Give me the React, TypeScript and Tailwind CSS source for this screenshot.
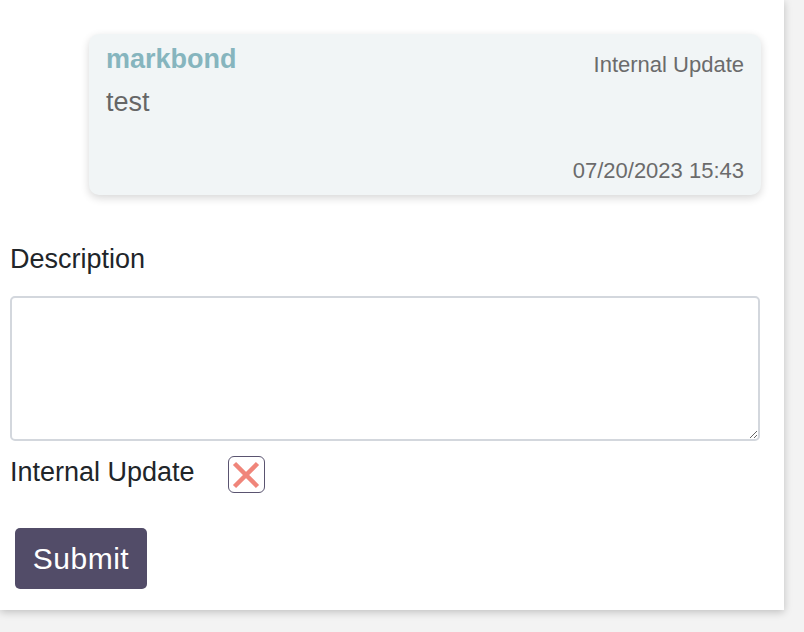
import React from "react";

export default function App() {
  return (
    <div
      className="w-[804px] h-[632px] bg-[#f3f3f3] overflow-hidden"
      style={{ fontFamily: '"Liberation Sans", Arial, sans-serif' }}
    >
      <div className="w-[784px] h-[610px] bg-white shadow-[0_2px_8px_rgba(0,0,0,0.22)] pl-[10px] pt-[34px] flex flex-col">
        <div className="ml-[79px] w-[672px] h-[161px] rounded-[10px] bg-[#f1f5f6] shadow-[0_3px_8px_rgba(0,0,0,0.16)] px-[17px] pt-[9px] pb-[11px] flex flex-col">
          <div className="flex justify-between items-start">
            <div className="text-[27px] leading-[32px] font-bold text-[#86b5be]">markbond</div>
            <div className="mt-[9px] text-[22px] leading-[26px] text-[#6b6b6b]">Internal Update</div>
          </div>
          <div className="mt-[8px] text-[27px] leading-[32px] text-[#666666]">test</div>
          <div className="mt-auto text-right text-[22px] leading-[26px] text-[#6b6b6b]">07/20/2023 15:43</div>
        </div>
        <div className="mt-[48px] text-[27px] leading-[32px] text-[#212529]">Description</div>
        <textarea className="mt-[21px] w-[750px] h-[145px] border-2 border-[#d3d7dd] rounded-[5px] bg-white outline-none" />
        <div className="mt-[15px] flex items-start">
          <span className="text-[27px] leading-[32px] text-[#212529]">Internal Update</span>
          <div className="ml-[33px] w-[37px] h-[37px] border border-[#5a5470] rounded-[6px] flex items-center justify-center">
            <svg width="30" height="30" viewBox="0 0 30 30">
              <path d="M3.5 3.5 L26.5 26.5 M26.5 3.5 L3.5 26.5" stroke="#f0857a" strokeWidth="4.5" strokeLinecap="butt" />
            </svg>
          </div>
        </div>
        <button className="mt-[35px] ml-[5px] w-[132px] h-[61px] bg-[#524c68] rounded-[5px] text-white text-[30px] leading-[34px] tracking-[0.5px] flex items-center justify-center">
          Submit
        </button>
      </div>
    </div>
  );
}
